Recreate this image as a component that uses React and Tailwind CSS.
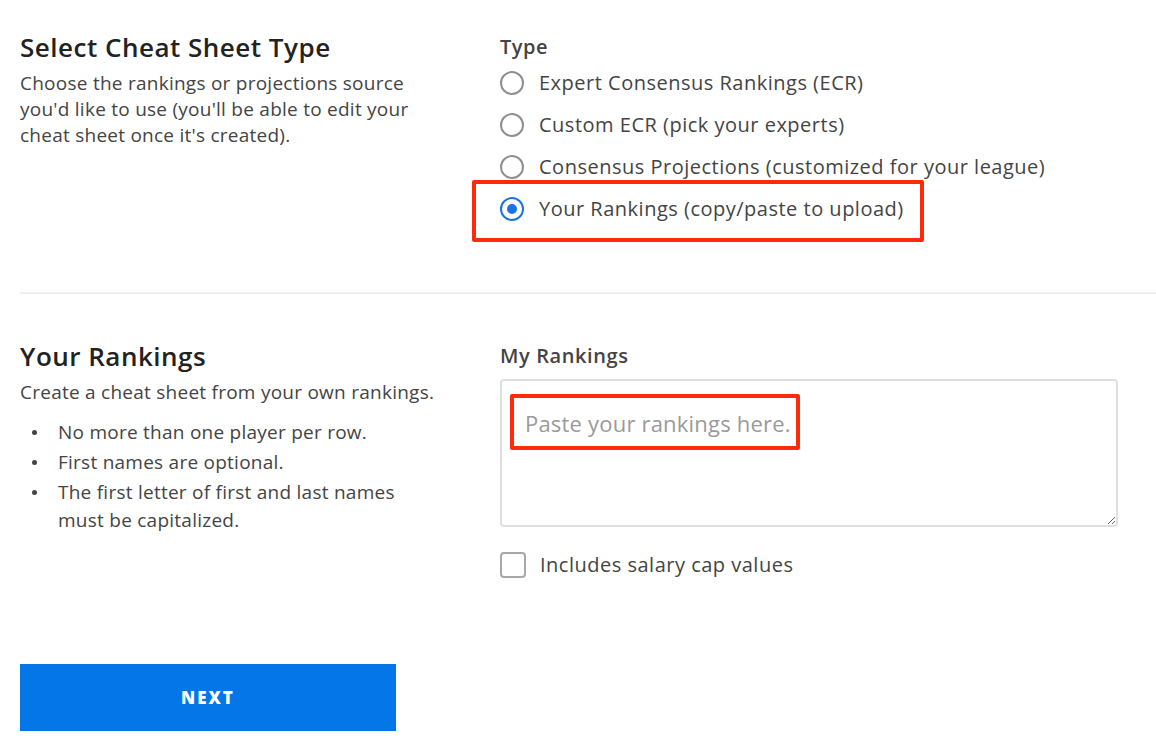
import React from "react";

const font = { fontFamily: '"Open Sans", "Noto Sans", Arial, sans-serif' };

function Radio({ label, checked, annotated }) {
  return (
    <div className="relative flex h-[42px] items-center">
      {annotated && (
        <div className="pointer-events-none absolute left-[-28px] top-[-8px] h-[62px] w-[452px] rounded-[2px] border-4 border-[#ff2a0a]" />
      )}
      {checked ? (
        <span className="flex h-[24px] w-[24px] items-center justify-center rounded-full border-2 border-[#1a73e8]">
          <span className="h-[10px] w-[10px] rounded-full bg-[#1a73e8]" />
        </span>
      ) : (
        <span className="h-[24px] w-[24px] rounded-full border-2 border-[#8f8f8f]" />
      )}
      <span className="ml-[15px] text-[20px] leading-[26px] tracking-[0.5px] text-[#444]">{label}</span>
    </div>
  );
}

function Bullet({ children }) {
  return (
    <li className="mb-[2px] flex">
      <span className="flex h-[28px] w-[38px] shrink-0 items-center pl-[12px]">
        <span className="h-[5px] w-[5px] rounded-full bg-[#444]" />
      </span>
      <span>{children}</span>
    </li>
  );
}

export default function App() {
  return (
    <div className="min-h-[756px] w-[1156px] bg-white" style={font}>
      <div className="flex pl-[20px] pt-[31px]">
        <div className="w-[480px]">
          <h2 className="text-[26px] font-semibold leading-[32px] tracking-[0.5px] text-[#222]">Select Cheat Sheet Type</h2>
          <p className="mt-[7px] w-[405px] text-[19px] leading-[26px] tracking-[0.25px] text-[#444]">
            Choose the rankings or projections source you'd like to use (you'll be able to edit your cheat sheet once it's created).
          </p>
        </div>
        <div className="pt-[3px]">
          <div className="text-[20px] font-semibold leading-[26px] tracking-[0.5px] text-[#444]">Type</div>
          <div className="mt-[2px]">
            <Radio label="Expert Consensus Rankings (ECR)" />
            <Radio label="Custom ECR (pick your experts)" />
            <Radio label="Consensus Projections (customized for your league)" />
            <Radio label="Your Rankings (copy/paste to upload)" checked annotated />
          </div>
        </div>
      </div>

      <div className="ml-[20px] mt-[62px] h-[2px] bg-[#f0f0f0]" />

      <div className="flex pl-[20px] pt-[46px]">
        <div className="w-[480px]">
          <h2 className="text-[26px] font-semibold leading-[32px] tracking-[0.5px] text-[#222]">Your Rankings</h2>
          <p className="mt-[7px] text-[19px] leading-[26px] tracking-[0.25px] text-[#444]">Create a cheat sheet from your own rankings.</p>
          <ul className="mt-[13px] w-[400px] text-[19px] leading-[28px] tracking-[0.25px] text-[#444]">
            <Bullet>No more than one player per row.</Bullet>
            <Bullet>First names are optional.</Bullet>
            <Bullet>The first letter of first and last names must be capitalized.</Bullet>
          </ul>
        </div>
        <div>
          <div className="mt-[3px] text-[20px] font-semibold leading-[26px] tracking-[0.6px] text-[#444]">My Rankings</div>
          <div className="relative mt-[10px] w-[618px]">
            <textarea
              className="block h-[148px] w-[618px] resize-y rounded-[4px] border-2 border-[#e0e0e0] pl-[23px] pt-[28px] text-[22px] leading-[28px] tracking-[0.2px] text-[#444] outline-none placeholder:text-[#9a9a9a]"
              style={font}
              placeholder="Paste your rankings here."
            />
            <div className="pointer-events-none absolute left-[10px] top-[15px] h-[56px] w-[290px] rounded-[2px] border-4 border-[#ff2a0a]" />
          </div>
          <label className="mt-[25px] flex items-center">
            <span className="h-[26px] w-[26px] rounded-[4px] border-2 border-[#a8a8a8]" />
            <span className="ml-[14px] text-[20px] leading-[26px] tracking-[0.5px] text-[#444]">Includes salary cap values</span>
          </label>
        </div>
      </div>

      <div className="pl-[20px] pt-[86px]">
        <button className="flex h-[67px] w-[376px] items-center justify-center bg-[#0576e8] text-[17px] font-extrabold tracking-[2px] text-white" style={font}>
          NEXT
        </button>
      </div>
    </div>
  );
}
